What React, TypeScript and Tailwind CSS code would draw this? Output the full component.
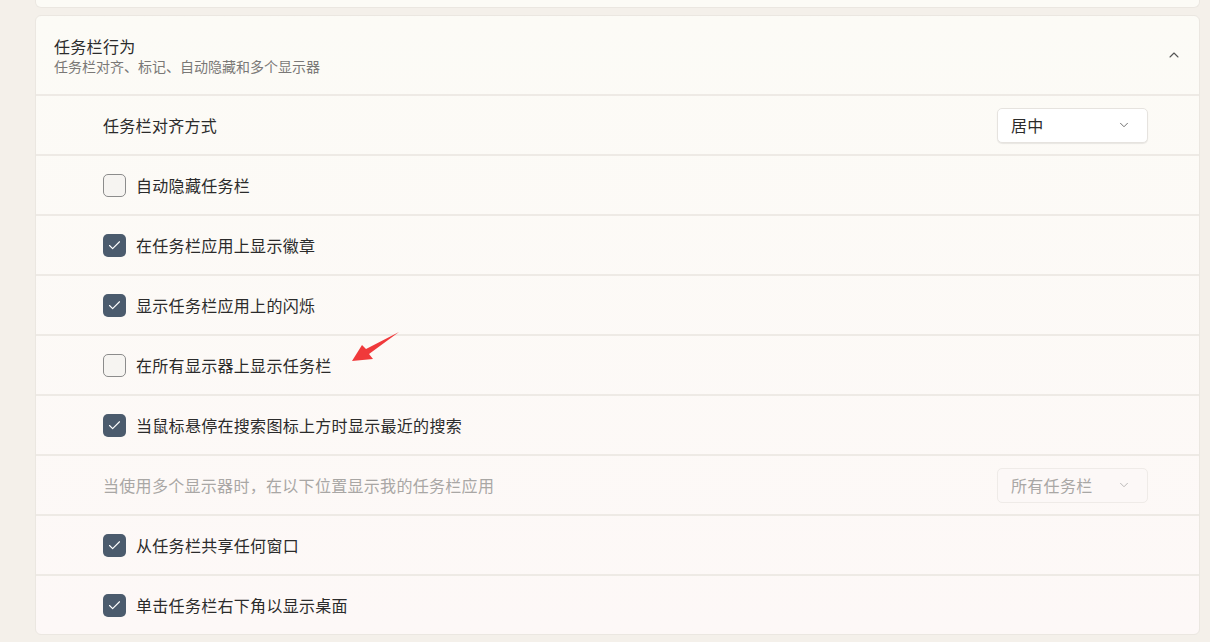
import { Check, ChevronDown, ChevronUp } from "lucide-react";

const font = { fontFamily: '"Noto Sans CJK SC", "Noto Sans", sans-serif' };

function Box({ checked }: { checked: boolean }) {
  return checked ? (
    <span className="flex h-[23px] w-[23px] items-center justify-center rounded-[5px] bg-[#4b5b6d]">
      <Check size={15} strokeWidth={1.8} className="text-white" />
    </span>
  ) : (
    <span className="h-[23px] w-[23px] rounded-[5px] border border-[#8c8c8c] bg-[#f6f4f1]" />
  );
}

function CheckRow({ label, checked }: { label: string; checked: boolean }) {
  return (
    <div className="flex h-[60px] items-center gap-[10px] border-t-2 border-[#eeeae5] pl-[67px]">
      <Box checked={checked} />
      <span className="text-[16px] tracking-[0.3px] text-[#2b2b2b]">{label}</span>
    </div>
  );
}

function SelectRow({ label, value, disabled }: { label: string; value: string; disabled?: boolean }) {
  return (
    <div className="flex h-[60px] items-center justify-between border-t-2 border-[#eeeae5] pl-[67px] pr-[51px]">
      <span className={`text-[16px] tracking-[0.3px] ${disabled ? "text-[#a9a7a5]" : "text-[#2b2b2b]"}`}>{label}</span>
      <div
        className={`flex h-[35px] w-[151px] items-center justify-between rounded-[5px] border pl-[13px] pr-[16px] ${
          disabled ? "border-[#efebe8] bg-[#fcf8f7] text-[#a9a7a5]" : "border-[#e6e3df] bg-white text-[#2b2b2b] shadow-[0_1px_1px_rgba(0,0,0,0.08)]"
        }`}
      >
        <span className="text-[16px] tracking-[0.3px]">{value}</span>
        <ChevronDown size={14} strokeWidth={1.6} className={disabled ? "text-[#b5b3b1]" : "text-[#666]"} />
      </div>
    </div>
  );
}

export default function App() {
  return (
    <div className="relative h-[642px] w-[1210px] overflow-hidden bg-[#f4f0ea]" style={font}>
      <div className="flex flex-col gap-[7px] pl-[35px] pr-[10px]">
        <div className="-mt-[10px] h-[18px] rounded-b-[6px] border border-t-0 border-[#ebe7e1] bg-[#fcfbf6]" />
        <div className="overflow-hidden rounded-[6px] border border-[#ebe7e1] bg-gradient-to-b from-[#fcfbf6] to-[#fdf8f7]">
          <div className="flex h-[78px] items-center justify-between pl-[18px] pr-[17px]">
            <div className="flex flex-col">
              <span className="text-[16px] leading-[22px] tracking-[0.3px] text-[#2b2b2b]">任务栏行为</span>
              <span className="text-[14px] leading-[19px] text-[#7a7876]">
                任务栏对齐、标记、自动隐藏和多个显示器
              </span>
            </div>
            <ChevronUp size={16} strokeWidth={1.6} className="text-[#555]" />
          </div>
          <SelectRow label="任务栏对齐方式" value="居中" />
          <CheckRow label="自动隐藏任务栏" checked={false} />
          <CheckRow label="在任务栏应用上显示徽章" checked />
          <CheckRow label="显示任务栏应用上的闪烁" checked />
          <CheckRow label="在所有显示器上显示任务栏" checked={false} />
          <CheckRow label="当鼠标悬停在搜索图标上方时显示最近的搜索" checked />
          <SelectRow label="当使用多个显示器时，在以下位置显示我的任务栏应用" value="所有任务栏" disabled />
          <CheckRow label="从任务栏共享任何窗口" checked />
          <CheckRow label="单击任务栏右下角以显示桌面" checked />
        </div>
      </div>
      <svg className="pointer-events-none absolute left-0 top-0" width="1210" height="642">
        <path d="M352 361 L362 345 L366 349 L399 332 L369 354 L373 359 Z" fill="#f0393b" />
      </svg>
    </div>
  );
}
